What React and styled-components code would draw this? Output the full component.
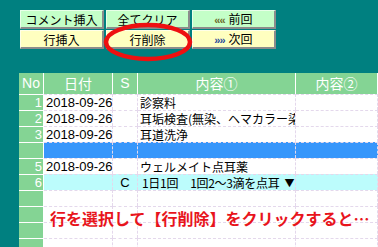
import React from 'react';
import styled, { createGlobalStyle } from 'styled-components';

const GlobalStyle = createGlobalStyle`
  html, body {
    margin: 0;
    padding: 0;
    background: #008080;
  }
  body {
    font-family: "Noto Sans CJK JP", "Liberation Sans", sans-serif;
  }
`;

const Page = styled.div`
  position: relative;
  width: 378px;
  height: 247px;
  overflow: hidden;
  background: #008080;
  padding: 10px 0 0 19px;
  box-sizing: border-box;
`;

const Toolbar = styled.div`
  display: grid;
  grid-template-columns: 84px 84px 84px;
  grid-auto-rows: 19px;
  column-gap: 2px;
  row-gap: 1px;
  margin-left: 1px;
`;

const Button = styled.button`
  margin: 0;
  padding: 0;
  height: 19px;
  box-sizing: border-box;
  background: ${(p) => (p.$yellow ? '#ffffc0' : '#c4ffc8')};
  border-top: 1px solid ${(p) => (p.$yellow ? '#ffffe8' : '#e8ffe8')};
  border-left: 1px solid ${(p) => (p.$yellow ? '#ffffe8' : '#e8ffe8')};
  border-right: 2px solid #8c8c8c;
  border-bottom: 2px solid #8c8c8c;
  font-family: "Noto Sans CJK JP", sans-serif;
  font-size: 12px;
  line-height: 15px;
  color: #000;
  text-align: center;
`;

const Arrow = styled.span`
  font-family: "Liberation Sans", sans-serif;
  font-size: 11px;
  font-weight: bold;
  color: ${(p) => p.$c};
  margin-right: 4px;
  letter-spacing: -1px;
`;

const Ring = styled.svg`
  position: absolute;
  left: 103px;
  top: 22px;
`;

const Table = styled.div`
  margin-top: 24px;
  width: 359px;
  display: grid;
  grid-template-columns: 25px 69px 25px 158px 82px;
`;

const Head = styled.div`
  height: 21px;
  box-sizing: border-box;
  background: #84d494;
  border-right: 1px solid #ffffff;
  color: #ffffff;
  font-size: 14px;
  line-height: 21px;
  text-align: center;
  font-family: ${(p) => (p.$latin ? '"Liberation Sans", sans-serif' : '"Noto Sans CJK JP", sans-serif')};
  &:last-child {
    border-right: none;
  }
`;

const Num = styled.div`
  height: 16px;
  box-sizing: border-box;
  background: #84d494;
  border-top: 1px solid #ffffff;
  border-right: 1px solid #ffffff;
  color: #ffffff;
  font-family: "Liberation Sans", sans-serif;
  font-size: 13px;
  line-height: 15px;
  text-align: right;
  padding-right: 1px;
`;

const rowBg = { blue: '#3796fb', cyan: '#bcfcfc', plain: '#ffffff' };

const Cell = styled.div`
  height: 16px;
  box-sizing: border-box;
  background: ${(p) => rowBg[p.$tone || 'plain']};
  border-top: 1px dashed #e4d8ec;
  border-right: 1px dashed #e4d8ec;
  font-family: ${(p) => (p.$latin ? '"Liberation Sans", sans-serif' : '"Noto Sans CJK JP", sans-serif')};
  font-size: ${(p) => (p.$latin ? '13px' : '12px')};
  line-height: 15px;
  color: #000;
  white-space: nowrap;
  overflow: hidden;
  text-align: ${(p) => p.$align || 'left'};
  padding-left: ${(p) => (p.$align ? '0' : '2px')};
`;

const Select = styled.span`
  display: inline-flex;
  align-items: center;
  width: 148px;
  padding-left: 2px;
  font-size: 12px;
  letter-spacing: -0.3px;
`;

const Part = styled.span`
  margin-right: ${(p) => p.$gap || 0}px;
`;

const Caret = styled.span`
  font-size: 10px;
  margin-left: 5px;
`;

const Note = styled.div`
  position: absolute;
  left: 50px;
  top: 208px;
  color: #e8141c;
  font-family: "Noto Sans CJK JP", sans-serif;
  font-weight: bold;
  font-size: 16px;
  line-height: 20px;
  letter-spacing: 0;
  white-space: nowrap;
`;

const rows = [
  { n: '1', date: '2018-09-26', s: '', text: '診察料' },
  { n: '2', date: '2018-09-26', s: '', text: '耳垢検査(無染、ヘマカラー染色鏡検)' },
  { n: '3', date: '2018-09-26', s: '', text: '耳道洗浄' },
  { n: '', date: '', s: '', text: '', tone: 'blue' },
  { n: '5', date: '2018-09-26', s: '', text: 'ウェルメイト点耳薬' },
  { n: '6', date: '', s: 'C', text: null, tone: 'cyan' },
  { n: '', date: '', s: '', text: '' },
  { n: '', date: '', s: '', text: '' },
  { n: '', date: '', s: '', text: '' },
  { n: '', date: '', s: '', text: '' },
];

export default function App() {
  return (
    <>
      <GlobalStyle />
      <Page>
        <Toolbar>
          <Button>コメント挿入</Button>
          <Button>全てクリア</Button>
          <Button>
            <Arrow $c="#6b6b2a">««</Arrow>前回
          </Button>
          <Button $yellow>行挿入</Button>
          <Button $yellow>行削除</Button>
          <Button $yellow>
            <Arrow $c="#2a4a9a">»»</Arrow>次回
          </Button>
        </Toolbar>
        <Ring width="92" height="42" viewBox="0 0 92 42">
          <ellipse cx="45" cy="20" rx="42" ry="17" fill="none" stroke="#ee1010" strokeWidth="4.5" />
        </Ring>
        <Table>
          <Head $latin>No</Head>
          <Head>日付</Head>
          <Head $latin>S</Head>
          <Head>内容①</Head>
          <Head>内容②</Head>
          {rows.map((r, i) => (
            <React.Fragment key={i}>
              <Num>{r.n}</Num>
              <Cell $tone={r.tone} $latin>{r.date}</Cell>
              <Cell $tone={r.tone} $latin $align="center">{r.s}</Cell>
              <Cell $tone={r.tone}>
                {r.text === null ? (
                  <Select>
                    <Part $gap={12}>1日1回</Part>
                    <Part>1回2～3滴を点耳</Part>
                    <Caret>▼</Caret>
                  </Select>
                ) : (
                  r.text
                )}
              </Cell>
              <Cell $tone={r.tone} />
            </React.Fragment>
          ))}
        </Table>
        <Note>行を選択して【行削除】をクリックすると…</Note>
      </Page>
    </>
  );
}
